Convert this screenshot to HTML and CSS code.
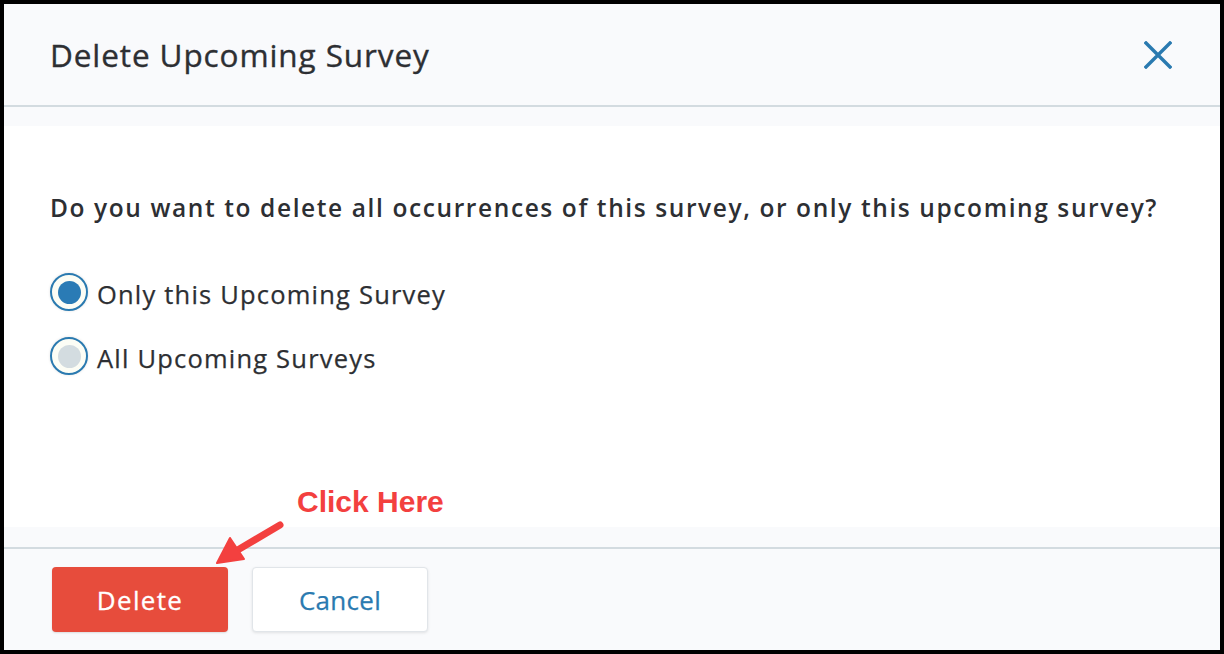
FILE: index.html
```html
<!DOCTYPE html>
<html>
<head>
<meta charset="utf-8">
<link rel="stylesheet" href="styles.css">
</head>
<body>
<div class="modal">
  <header class="modal-header">
    <h1 class="title">Delete Upcoming Survey</h1>
    <button class="close" aria-label="Close">
      <svg width="28" height="28" viewBox="0 0 28 28"><path d="M2 2 L26 26 M26 2 L2 26" stroke="#2a7ab0" stroke-width="3.4" stroke-linecap="square" fill="none"/></svg>
    </button>
  </header>
  <section class="modal-body">
    <div class="content">
      <p class="question">Do you want to delete all occurrences of this survey, or only this upcoming survey?</p>
      <div class="options">
        <label class="option"><span class="radio checked"><span class="dot"></span></span><span class="label">Only this Upcoming Survey</span></label>
        <label class="option"><span class="radio"><span class="dot"></span></span><span class="label">All Upcoming Surveys</span></label>
      </div>
    </div>
  </section>
  <footer class="modal-footer">
    <button class="btn btn-delete">Delete</button>
    <button class="btn btn-cancel">Cancel</button>
  </footer>
  <div class="callout">Click Here</div>
  <svg class="arrow" width="80" height="56" viewBox="0 0 80 56">
    <path d="M66 5 L22 31" stroke="#f3403f" stroke-width="7" stroke-linecap="round" fill="none"/>
    <path d="M3 43 L16 18 L30 39 Z" fill="#f3403f" stroke="#f3403f" stroke-width="2" stroke-linejoin="round"/>
  </svg>
</div>
</body>
</html>
```
FILE: styles.css
```css
* { box-sizing: border-box; }
html, body { margin: 0; padding: 0; }
body {
  background: #000;
  padding: 4px;
  width: 1224px;
  height: 654px;
  font-family: "Open Sans", "Noto Sans", sans-serif;
}
.modal {
  position: relative;
  width: 1216px;
  height: 646px;
  background: #f9fafc;
  display: flex;
  flex-direction: column;
}
.modal-header {
  height: 103px;
  border-bottom: 2px solid #d3dbe0;
  display: flex;
  align-items: center;
  justify-content: space-between;
  padding: 0 48px 0 46px;
}
.title {
  margin: 0;
  font-size: 31.5px;
  font-weight: 500;
  letter-spacing: 0.9px;
  color: #2d2f33;
  -webkit-text-stroke: 0.35px #2d2f33;
}
.close {
  border: 0;
  background: transparent;
  padding: 0;
  width: 28px;
  height: 28px;
  display: flex;
}
.modal-body {
  height: 440px;
  padding: 19px 0 20px;
}
.content {
  background: #fff;
  height: 401px;
  padding: 66px 0 0 46px;
}
.question {
  margin: 0;
  font-size: 24.5px;
  line-height: 32px;
  font-weight: 600;
  letter-spacing: 1.6px;
  color: #2d2f33;
}
.options {
  margin-top: 49px;
  display: flex;
  flex-direction: column;
  gap: 26px;
}
.option {
  display: flex;
  align-items: center;
  gap: 9px;
}
.radio {
  width: 38px;
  height: 38px;
  border-radius: 50%;
  border: 2px solid #2a7ab0;
  background: #fcfdf5;
  display: flex;
  align-items: center;
  justify-content: center;
  box-shadow: 0 0 3px rgba(0,0,0,0.12);
}
.dot {
  width: 23px;
  height: 23px;
  border-radius: 50%;
  background: #d3dce0;
}
.radio.checked .dot { background: #2a7bb5; }
.label {
  font-size: 25.5px;
  letter-spacing: 1.2px;
  color: #2d2f33;
  line-height: 34px;
  margin-top: 4px;
  -webkit-text-stroke: 0.25px #2d2f33;
}
.modal-footer {
  flex: 1;
  border-top: 2px solid #d3dbe0;
  display: flex;
  align-items: center;
  gap: 24px;
  padding: 0 0 0 48px;
}
.btn {
  width: 176px;
  height: 65px;
  border-radius: 4px;
  font-family: "Open Sans", "Noto Sans", sans-serif;
  font-size: 26px;
  font-weight: 500;
  padding: 0;
}
.btn-delete {
  background: #e74c3c;
  color: #fff;
  border: 0;
  letter-spacing: 1.3px;
  -webkit-text-stroke: 0.3px #fff;
  box-shadow: 0 1px 2px rgba(0,0,0,0.12);
}
.btn-cancel {
  background: #fff;
  color: #2a7ab0;
  border: 1px solid #e1e5e9;
  letter-spacing: 0.3px;
  -webkit-text-stroke: 0.25px #2a7ab0;
  box-shadow: 0 1px 3px rgba(0,0,0,0.1);
}
.callout {
  position: absolute;
  left: 293px;
  top: 481px;
  font-family: "Liberation Sans", Arial, sans-serif;
  font-weight: 700;
  font-size: 30px;
  color: #f3403f;
  line-height: 34px;
}
.arrow {
  position: absolute;
  left: 210px;
  top: 516px;
}
```
